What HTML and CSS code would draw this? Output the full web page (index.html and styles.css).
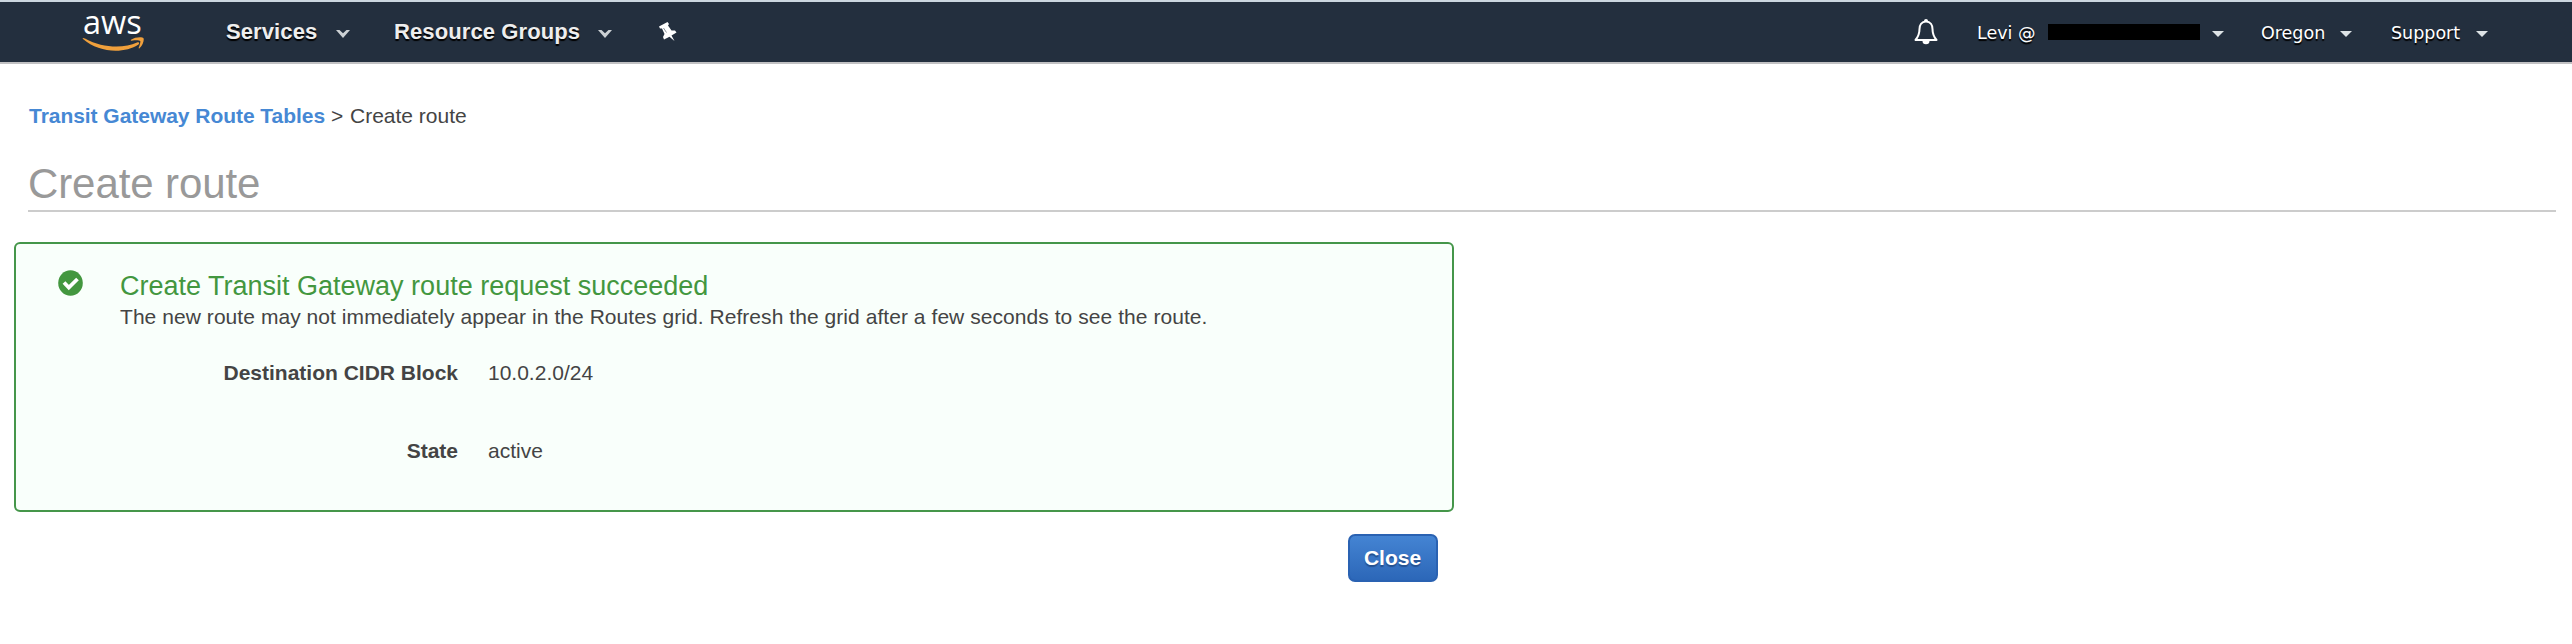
FILE: index.html
```html
<!DOCTYPE html>
<html lang="en">
<head>
<meta charset="utf-8">
<title>Create route</title>
<link rel="stylesheet" href="styles.css">
</head>
<body>
<header class="navbar">
  <div class="brand">
    <span class="brand-name">aws</span>
    <svg class="smile" width="64" height="16" viewBox="0 0 64 16"><path d="M1 2C0 .500 1.500 .700 3 1.500C21 11.500 42 11.500 55 5.500C57 4.500 58 6 56.500 7.500C42 17 17 16 1 2Z" fill="#f0a03c"/><path d="M49 2.800C53 -.200 60.500 -.300 61.500 1.200C62.400 3 60.800 8.500 57.500 11.300C57 11.700 56.400 11.400 56.700 10.700C57.600 8.400 58.800 5 58.200 4C57.400 3 53 3.200 49.700 3.700C48.800 3.800 48.500 3.200 49 2.800Z" fill="#f0a03c"/></svg>
  </div>
  <nav class="menu">
    <span class="menu-item services">Services</span>
    <svg class="chevron" width="14" height="8" viewBox="0 0 14 8"><path d="M0 0H3.500L7 3.200L10.500 0H14L7 8Z" fill="#ccd1d4"/></svg>
    <span class="menu-item groups">Resource Groups</span>
    <svg class="chevron" width="14" height="8" viewBox="0 0 14 8"><path d="M0 0H3.500L7 3.200L10.500 0H14L7 8Z" fill="#ccd1d4"/></svg>
    <svg class="pin" width="18" height="20" viewBox="0 0 18 20"><path d="M0 4.500L8.500 0L10 2L9 3.500L12.500 8.500L16 8.500L17.500 10.500L12.500 13.500L15.500 19L10.500 14.800L5 17.500L4 15L5.500 12L3 6.500L1 6.500Z" fill="#fff"/><path d="M4.500 6L7.500 10.500" stroke="#8a939c" stroke-width="1"/></svg>
  </nav>
  <div class="account">
    <svg class="bell" width="24" height="26" viewBox="0 0 24 26"><path d="M12 2.500C7.500 2.500 5.500 6 5.500 10C5.500 15 4 18 1.500 21H22.500C20 18 18.500 15 18.500 10C18.500 6 16.500 2.500 12 2.500Z" fill="none" stroke="#fff" stroke-width="2" stroke-linejoin="round"/><path d="M10 2a2 2 0 0 1 4 0ZM8.500 22H15.500A3.500 3.300 0 0 1 8.500 22Z" fill="#fff"/></svg>
    <span class="account-item user">Levi @</span>
    <span class="redacted"></span>
    <svg class="caret" width="12" height="6" viewBox="0 0 12 6"><path d="M0 0H12L6 6Z" fill="#dde3e6"/></svg>
    <span class="account-item region">Oregon</span>
    <svg class="caret" width="12" height="6" viewBox="0 0 12 6"><path d="M0 0H12L6 6Z" fill="#dde3e6"/></svg>
    <span class="account-item support">Support</span>
    <svg class="caret" width="12" height="6" viewBox="0 0 12 6"><path d="M0 0H12L6 6Z" fill="#dde3e6"/></svg>
  </div>
</header>
<main class="page">
  <div class="breadcrumb"><a class="crumb-link">Transit Gateway Route Tables</a><span class="crumb-sep">&gt;</span><span>Create route</span></div>
  <h1 class="title">Create route</h1>
  <section class="result">
    <div class="notice">
      <svg class="check" width="26" height="26" viewBox="0 0 26 26"><ellipse cx="12.500" cy="13" rx="12.300" ry="12.800" fill="#43973f"/><path d="M6 12.500L10.800 17.500L19.500 9" fill="none" stroke="#fff" stroke-width="3.800"/></svg>
      <div class="notice-body">
        <h2 class="notice-title">Create Transit Gateway route request succeeded</h2>
        <p class="notice-text">The new route may not immediately appear in the Routes grid. Refresh the grid after a few seconds to see the route.</p>
        <dl class="details">
          <dt>Destination CIDR Block</dt><dd>10.0.2.0/24</dd>
          <dt>State</dt><dd>active</dd>
        </dl>
      </div>
    </div>
    <button class="close">Close</button>
  </section>
</main>
</body>
</html>
```
FILE: styles.css
```css
* { box-sizing: border-box; }
body { margin: 0; background: #fff; color: #444; font-family: "Liberation Sans", Arial, sans-serif; font-size: 21px; }
h1, h2, p, dl, dd { margin: 0; font-weight: normal; }
svg { display: block; flex: none; }

.navbar { display: flex; height: 64px; padding-left: 82px; border-top: 2px solid #cbd6df; border-bottom: 2px solid #c1c1c3; background: #232f3e; }
.brand { width: 64px; margin-right: 80px; }
.brand-name { display: block; height: 35px; padding-left: 1px; color: #fff; font: 500 32.500px/39px "Open Sans", sans-serif; }
.menu { display: flex; align-items: center; }
.menu-item { color: #eee; font-size: 22px; font-weight: bold; line-height: 26px; letter-spacing: 0.1px; text-shadow: 0 2px 1px #000; white-space: nowrap; }
.services { width: 110px; }
.groups { width: 204px; margin-left: 44px; }
.chevron { margin-top: 4px; }
.pin { margin-left: 47px; }
.account { display: flex; align-items: center; margin-left: auto; padding-right: 84px; }
.account-item { padding-top: 1px; color: #fff; font: 17.5px/24px "DejaVu Sans", Verdana, sans-serif; text-shadow: 0 2px 1px #000; white-space: nowrap; }
.bell { margin-right: 39px; }
.user { width: 71px; }
.redacted { width: 152px; height: 16px; margin-right: 12px; background: #000; }
.region { width: 79px; margin-left: 37px; }
.support { width: 85px; margin-left: 39px; }
.caret { margin-top: 3px; }

.page { padding: 39px 16px 0 14px; }
.breadcrumb { display: flex; padding-left: 15px; line-height: 26px; }
.crumb-link { width: 302px; color: #4688d4; font-weight: bold; letter-spacing: -0.04px; white-space: nowrap; }
.crumb-sep { width: 19px; }
.title { height: 64px; margin: 19px 0 30px 14px; border-bottom: 2px solid #ccc; padding-top: 12px; color: #999; font-size: 42px; line-height: 48px; letter-spacing: -0.1px; }
.result { display: flex; flex-direction: column; width: 1440px; }
.notice { display: flex; height: 270px; padding: 26px 42px; border: 2px solid #45964a; border-radius: 6px; background: #f9fffb; }
.check { margin-right: 36px; }
.notice-title { color: #43973f; font-size: 27px; line-height: 32px; }
.notice-text { margin-top: 2px; line-height: 26px; letter-spacing: 0.057px; white-space: nowrap; }
.details { display: grid; grid-template-columns: 338px auto; column-gap: 30px; row-gap: 52px; margin-top: 30px; line-height: 26px; }
.details dt { font-weight: bold; text-align: right; }
.close { align-self: flex-end; width: 90px; height: 48px; margin: 22px 16px 0 0; padding: 0 1px 0 0; border: 2px solid #2a62b2; border-radius: 7px; background: linear-gradient(#4484d3, #2c67b8); color: #fff; font: bold 21px/26px "Liberation Sans", Arial, sans-serif; text-shadow: 0 2px 1px #24508f; }
```
